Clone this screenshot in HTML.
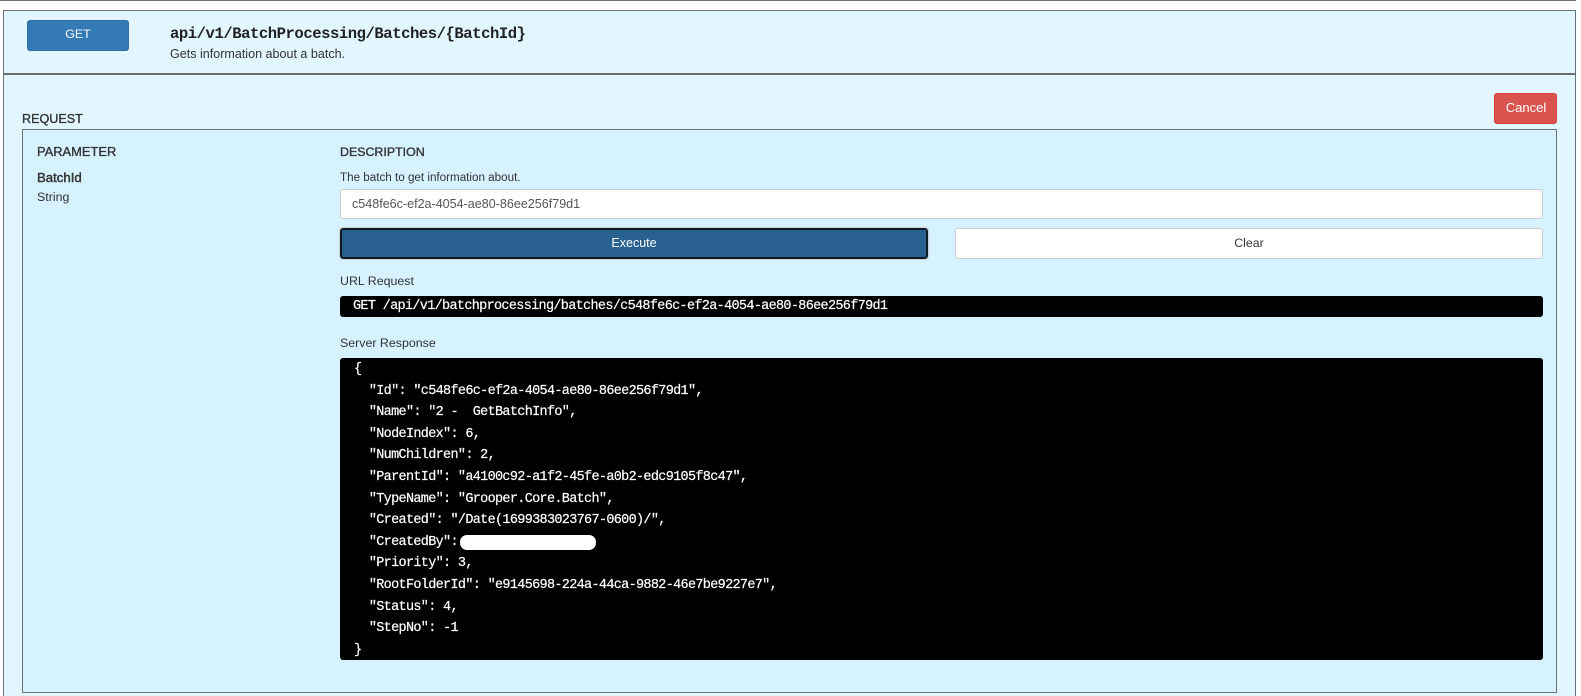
<!DOCTYPE html>
<html>
<head>
<meta charset="utf-8">
<style>
html,body{margin:0;padding:0;width:1581px;height:696px;overflow:hidden;background:#fff}
body{position:relative;font-family:"Liberation Sans",Arial,sans-serif;font-size:12px;color:#333}
div{position:absolute;box-sizing:border-box}
.t{white-space:pre;line-height:16px}
.m{font-family:"Liberation Mono",monospace;color:#fff;white-space:pre;font-size:13.5px;letter-spacing:-.68px;-webkit-text-stroke:.2px #fff}
.h{font-size:12.6px;color:#333;-webkit-text-stroke:.35px #333}
</style>
</head>
<body>
<div style="left:0;top:0;width:1576px;height:1px;background:#6f6f6f"></div>
<div style="left:3px;top:10px;width:1573px;height:700px;background:#e1f6ff;border:1px solid #6f7274"></div>
<div style="left:4px;top:73px;width:1571px;height:2px;background:#6a6c6e"></div>

<div style="left:27px;top:20px;width:102px;height:31px;background:#337ab7;border:1px solid #2e6da4;border-radius:3px;color:#fff;text-align:center;line-height:27px;font-size:12.4px">GET</div>
<div class="t" style="left:170px;top:26px;font-family:'Liberation Mono',monospace;font-weight:bold;font-size:15.6px;letter-spacing:-.47px;color:#222">api/v1/BatchProcessing/Batches/{BatchId}</div>
<div class="t" style="left:170px;top:46px;color:#333;font-size:12.55px">Gets information about a batch.</div>

<div class="t h" style="left:22px;top:111px">REQUEST</div>
<div style="left:1494px;top:93px;width:63px;height:31px;background:#d9534f;border:1px solid #d43f3a;border-radius:3px;color:#fff;text-align:center;line-height:27px;font-size:13px;text-indent:1px">Cancel</div>

<div style="left:22px;top:129px;width:1535px;height:564px;background:#d6f2ff;border:1px solid #6f7274"></div>

<div class="t h" style="left:37px;top:144px;font-size:12.9px">PARAMETER</div>
<div class="t h" style="left:37px;top:170px;font-size:13.2px;-webkit-text-stroke:.45px #333">BatchId</div>
<div class="t" style="left:37px;top:189px;font-size:12.4px">String</div>

<div class="t h" style="left:340px;top:144px;font-size:12.4px">DESCRIPTION</div>
<div class="t" style="left:340px;top:170px;font-size:11.65px">The batch to get information about.</div>
<div class="t" style="left:340px;top:189px;width:1203px;height:30px;background:#fff;border:1px solid #ccc;border-radius:3px;padding:6px 11px;color:#555;font-size:12.55px">c548fe6c-ef2a-4054-ae80-86ee256f79d1</div>

<div style="left:340px;top:228px;width:588px;height:31px;background:#286090;border:2px solid #101a22;border-radius:3px;outline:1px solid #c8d4da;color:#fff;text-align:center;line-height:26px;font-size:12.5px">Execute</div>
<div style="left:955px;top:228px;width:588px;height:31px;background:#fff;border:1px solid #ccc;border-radius:3px;text-align:center;line-height:28px;color:#333;font-size:12.3px">Clear</div>

<div class="t" style="left:340px;top:273px;font-size:12.4px">URL Request</div>
<div style="left:340px;top:296px;width:1203px;height:21px;background:#000;border-radius:3px"></div>
<div class="m" style="left:353px;top:297px;line-height:20px">GET /api/v1/batchprocessing/batches/c548fe6c-ef2a-4054-ae80-86ee256f79d1</div>

<div class="t" style="left:340px;top:335px;font-size:12.4px">Server Response</div>
<div style="left:340px;top:358px;width:1203px;height:302px;background:#000;border-radius:3px"></div>
<div class="m" style="left:354px;top:359px;line-height:21.6px">{
  "Id": "c548fe6c-ef2a-4054-ae80-86ee256f79d1",
  "Name": "2 -  GetBatchInfo",
  "NodeIndex": 6,
  "NumChildren": 2,
  "ParentId": "a4100c92-a1f2-45fe-a0b2-edc9105f8c47",
  "TypeName": "Grooper.Core.Batch",
  "Created": "/Date(1699383023767-0600)/",
  "CreatedBy":
  "Priority": 3,
  "RootFolderId": "e9145698-224a-44ca-9882-46e7be9227e7",
  "Status": 4,
  "StepNo": -1
}</div>
<div style="left:460px;top:535px;width:136px;height:15px;background:#fff;border-radius:7px"></div>
</body>
</html>
